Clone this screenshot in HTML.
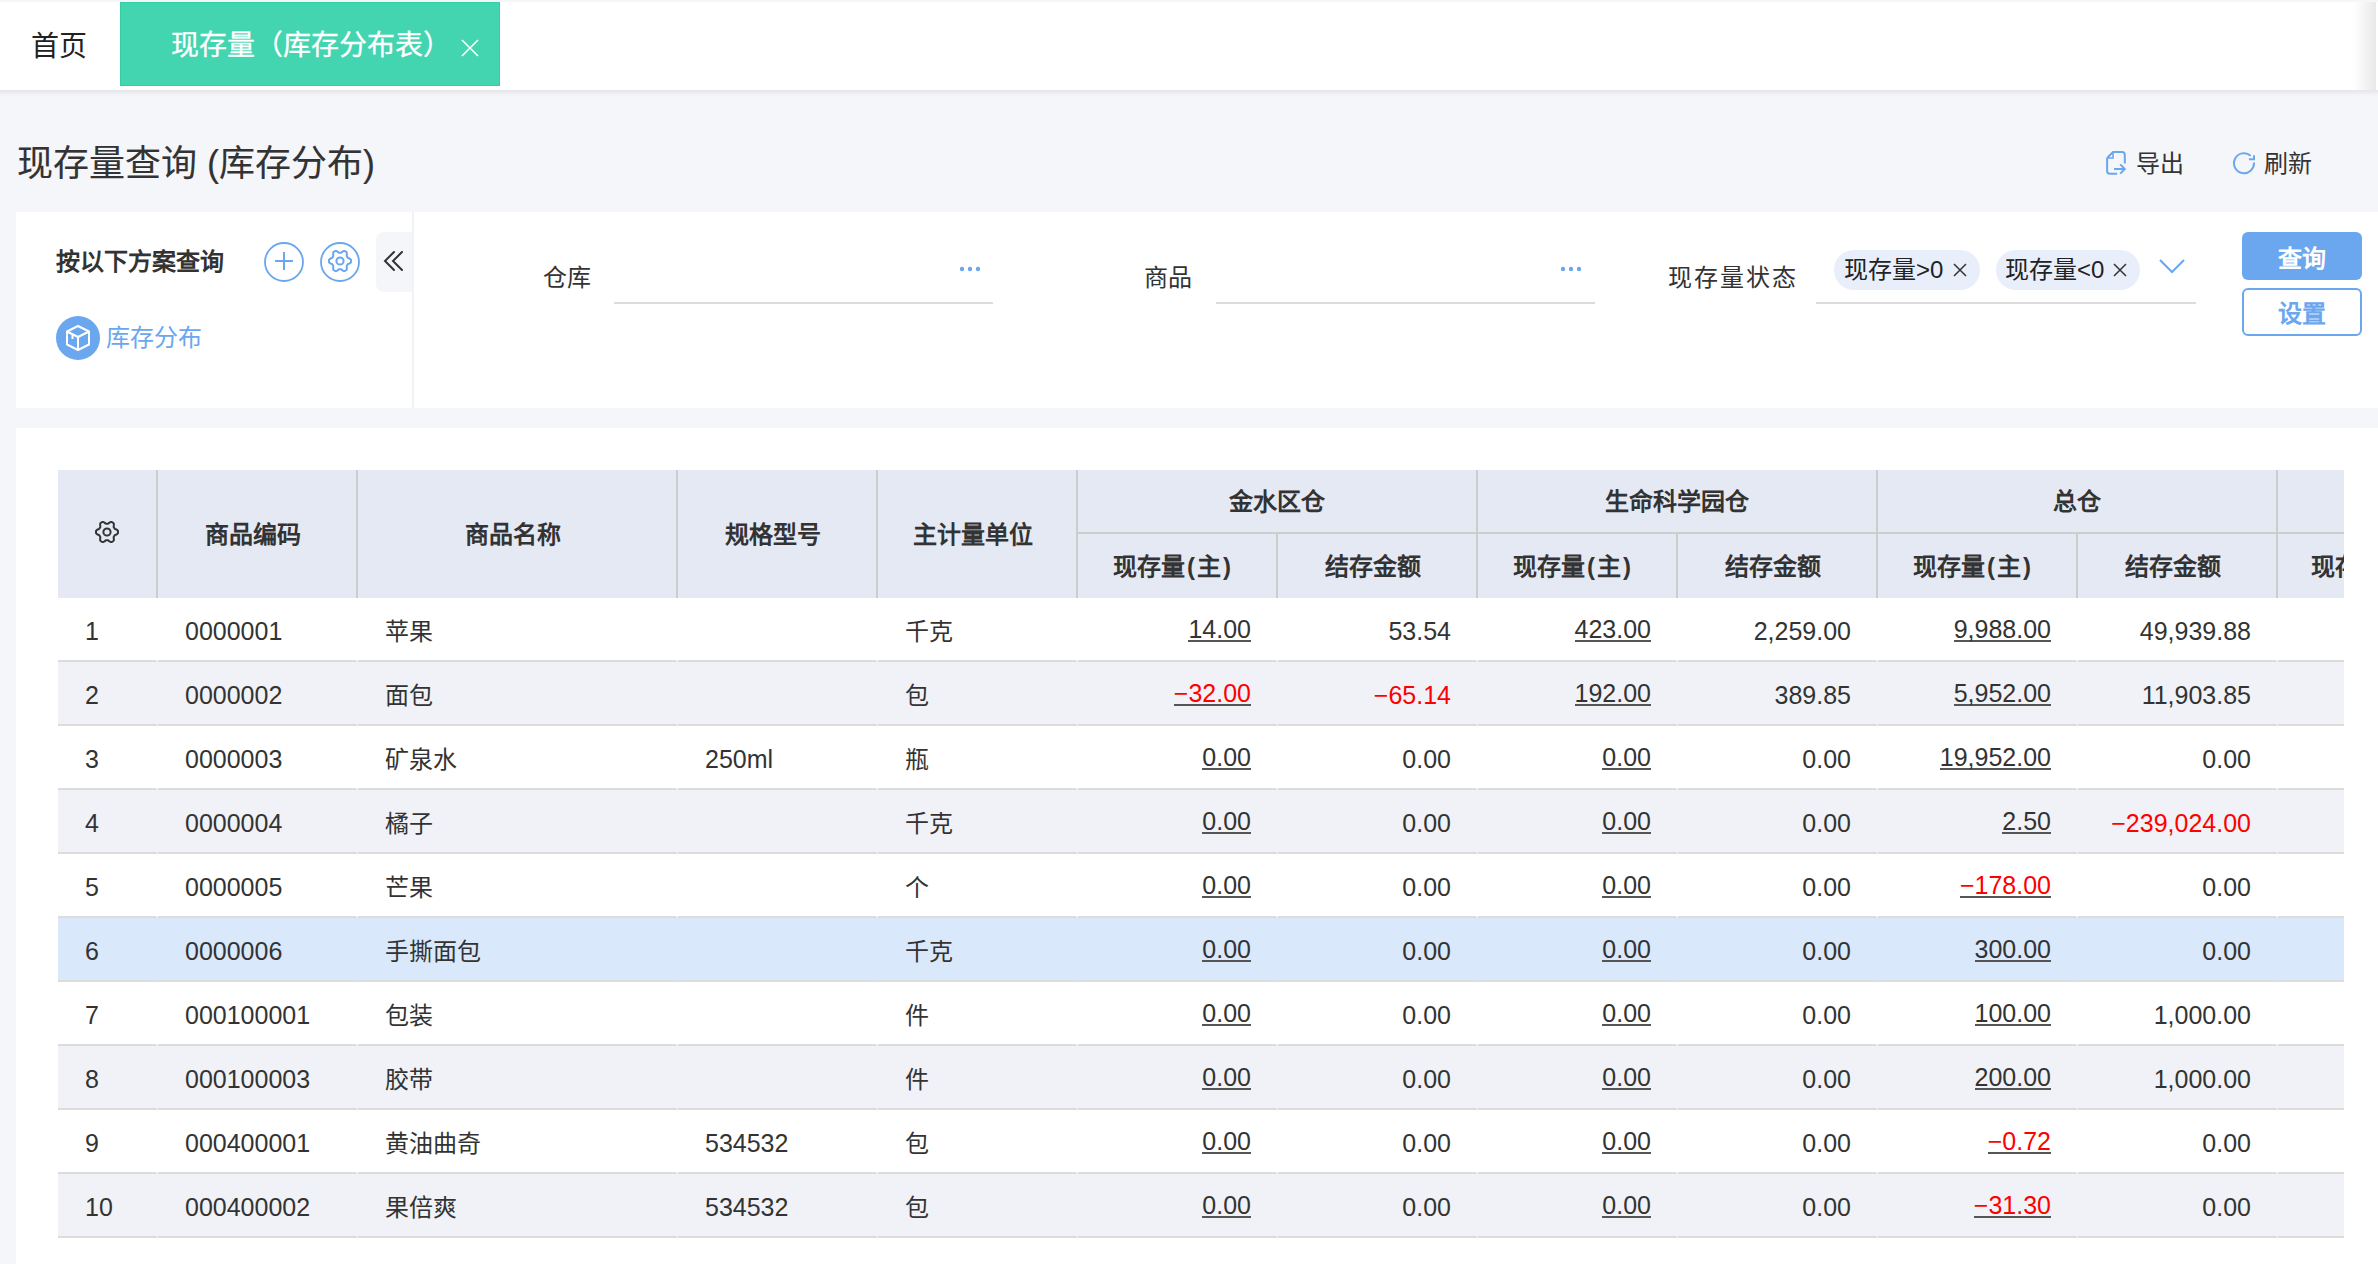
<!DOCTYPE html>
<html lang="zh-CN"><head><meta charset="utf-8">
<style>
*{box-sizing:border-box;margin:0;padding:0}
html,body{width:2378px;height:1264px;overflow:hidden;background:#f5f6fa;font-family:"Liberation Sans",sans-serif;color:#333}
.abs{position:absolute}
#tabbar{position:absolute;left:0;top:2px;width:2378px;height:88px;background:#fff}
#tabsh2{position:absolute;left:0;top:90px;width:2378px;height:6px;background:linear-gradient(rgba(0,0,0,0.065),rgba(0,0,0,0))}
#tabshadow{position:absolute;left:2354px;top:2px;width:22px;height:88px;background:linear-gradient(to right,rgba(0,0,0,0),rgba(0,0,0,0.09))}
.tab-home{position:absolute;left:31px;top:28px;font-size:28px;line-height:34px;color:#222}
.tab-act{position:absolute;left:120px;top:0px;width:380px;height:84px;background:#43d4b0;box-shadow:inset 0 0 0 1px #35cfa6}
.tab-act .t{position:absolute;left:51px;top:27px;font-size:28px;line-height:34px;color:#fff;white-space:nowrap;-webkit-text-stroke:0.3px #fff}
.title{position:absolute;left:17px;top:142px;font-size:36px;line-height:44px;color:#333;white-space:nowrap;-webkit-text-stroke:0.1px #333}
.tool{position:absolute;top:151px;font-size:24px;line-height:26px;color:#333}
#filter{position:absolute;left:16px;top:212px;width:2362px;height:196px;background:#fff}
#fdiv{position:absolute;left:396px;top:0;width:2px;height:196px;background:#f0f2f7}
.lbl{position:absolute;font-size:24px;line-height:28px;color:#333;white-space:nowrap}
.uline{position:absolute;height:2px;background:#dcdcdc}
.dots{position:absolute;width:22px;height:6px}
.tag{position:absolute;top:38px;height:40px;border-radius:20px;background:#e8effb;font-size:24px;line-height:40px;color:#222;white-space:nowrap}
.btn{position:absolute;left:2226px;width:120px;height:48px;border-radius:6px;font-size:24px;font-weight:bold;text-align:center;line-height:48px;padding-top:3px}
#tpanel{position:absolute;left:16px;top:428px;width:2362px;height:836px;background:#fff}
#twrap{position:absolute;left:58px;top:470px;width:2286px;height:794px;overflow:hidden}
table{border-collapse:separate;border-spacing:0;table-layout:fixed;width:2400px}
th{background:#e5e9f4;font-weight:bold;font-size:24px;color:#333;text-align:center;border-right:2px solid #cdcdcd;white-space:nowrap;overflow:hidden;padding-right:8px;padding-bottom:3px}
th.r1{padding-right:0;padding-bottom:4px}
.p{margin:0 2px}
th.r1{height:62px}
th.sub{height:66px;border-top:2px solid #cdcdcd}
td{height:64px;font-size:25px;color:#333;border-bottom:2px solid #dcdcdc;border-right:2px solid transparent;white-space:nowrap;padding:4px 25px 0 27px;overflow:hidden}
td .c{font-size:24px;position:relative;top:-2px}
td.n{text-align:right}
tr.s td{background:#f0f2f7}
tr.sel td{background:#d9e8fb}
.u{display:inline-block;border-bottom:2px solid #555;line-height:22px;position:relative;top:-2px}
.red{color:#f00}
</style></head><body>
<div id="tabbar">
  <div class="tab-home">首页</div>
  <div class="tab-act"><div class="t">现存量（库存分布表）</div>
    <svg class="abs" style="left:341px;top:37px" width="18" height="18" viewBox="0 0 18 18"><path d="M1 1L17 17M17 1L1 17" stroke="#fff" stroke-width="1.6"/></svg>
  </div>
</div>
<div id="tabshadow"></div>
<div id="tabsh2"></div>

<div class="title">现存量查询 (库存分布)</div>

<svg class="abs" style="left:2104px;top:149px" width="26" height="28" viewBox="0 0 26 28">
  <path d="M3.1 9 L9 3.1 H18 Q20.8 3.1 20.8 6 V14.6" fill="none" stroke="#6aa7ee" stroke-width="2"/>
  <path d="M3.1 9 V22 Q3.1 24.8 6 24.8 H13.2" fill="none" stroke="#6aa7ee" stroke-width="2"/>
  <path d="M3.6 9 H9 V3.6" fill="none" stroke="#6aa7ee" stroke-width="1.6"/>
  <path d="M10 20 H21 M16.2 15.4 L20.8 20 L16.2 24.6" fill="none" stroke="#6aa7ee" stroke-width="2"/>
</svg>
<div class="tool" style="left:2136px">导出</div>
<svg class="abs" style="left:2231px;top:151px" width="26" height="24" viewBox="0 0 26 24">
  <path d="M19.69 4.77 A10 10 0 1 0 22.98 11.5" fill="none" stroke="#6aa7ee" stroke-width="2"/>
  <path d="M17.9 8.3 H23 V4.2" fill="none" stroke="#6aa7ee" stroke-width="2"/>
</svg>
<div class="tool" style="left:2264px">刷新</div>

<div id="filter">
  <div class="lbl" style="left:40px;top:36px;font-weight:bold">按以下方案查询</div>
  <svg class="abs" style="left:248px;top:30px" width="40" height="40" viewBox="0 0 40 40">
    <circle cx="20" cy="20" r="19" fill="none" stroke="#6aa7ee" stroke-width="1.8"/>
    <path d="M11 19H29M20 10V28" stroke="#6aa7ee" stroke-width="2"/>
  </svg>
  <svg class="abs" style="left:304px;top:30px" width="40" height="40" viewBox="0 0 40 40">
    <circle cx="20" cy="20" r="19" fill="none" stroke="#6aa7ee" stroke-width="1.8"/>
    <g transform="translate(20 19)">
      <path d="M0.00 -8.30L0.43 -8.29L0.87 -8.25L1.34 -8.43L1.88 -8.87L2.50 -9.32L3.16 -9.73L3.86 -10.05L4.47 -10.05L4.99 -9.80L5.50 -9.53L5.99 -9.23L6.47 -8.90L6.77 -8.36L6.85 -7.61L6.82 -6.82L6.74 -6.07L6.64 -5.37L6.71 -4.88L6.96 -4.52L7.19 -4.15L7.40 -3.77L7.58 -3.38L7.97 -3.06L8.62 -2.80L9.32 -2.50L10.01 -2.13L10.63 -1.68L10.94 -1.15L10.98 -0.58L11.00 -0.00L10.98 0.58L10.94 1.15L10.63 1.68L10.01 2.13L9.32 2.50L8.62 2.80L7.97 3.06L7.58 3.38L7.40 3.77L7.19 4.15L6.96 4.52L6.71 4.88L6.64 5.37L6.74 6.07L6.82 6.82L6.85 7.61L6.77 8.36L6.47 8.90L5.99 9.23L5.50 9.53L4.99 9.80L4.47 10.05L3.86 10.05L3.16 9.73L2.50 9.32L1.88 8.87L1.34 8.43L0.87 8.25L0.43 8.29L0.00 8.30L-0.43 8.29L-0.87 8.25L-1.34 8.43L-1.88 8.87L-2.50 9.32L-3.16 9.73L-3.86 10.05L-4.47 10.05L-4.99 9.80L-5.50 9.53L-5.99 9.23L-6.47 8.90L-6.77 8.36L-6.85 7.61L-6.82 6.82L-6.74 6.07L-6.64 5.37L-6.71 4.88L-6.96 4.52L-7.19 4.15L-7.40 3.77L-7.58 3.38L-7.97 3.06L-8.62 2.80L-9.32 2.50L-10.01 2.13L-10.63 1.68L-10.94 1.15L-10.98 0.58L-11.00 0.00L-10.98 -0.58L-10.94 -1.15L-10.63 -1.68L-10.01 -2.13L-9.32 -2.50L-8.62 -2.80L-7.97 -3.06L-7.58 -3.38L-7.40 -3.77L-7.19 -4.15L-6.96 -4.52L-6.71 -4.88L-6.64 -5.37L-6.74 -6.07L-6.82 -6.82L-6.85 -7.61L-6.77 -8.36L-6.47 -8.90L-5.99 -9.23L-5.50 -9.53L-4.99 -9.80L-4.47 -10.05L-3.86 -10.05L-3.16 -9.73L-2.50 -9.32L-1.88 -8.87L-1.34 -8.43L-0.87 -8.25L-0.43 -8.29Z" fill="none" stroke="#6aa7ee" stroke-width="2" stroke-linejoin="round"/>
      <circle r="3.6" fill="none" stroke="#6aa7ee" stroke-width="2"/>
    </g>
  </svg>
  <div class="abs" style="left:360px;top:20px;width:36px;height:60px;background:#f5f6fa;border-radius:8px 0 0 8px"></div>
  <svg class="abs" style="left:367px;top:38px" width="24" height="24" viewBox="0 0 24 24">
    <path d="M11 2 L2 11 L11 20 M19 2 L10 11 L19 20" fill="none" stroke="#333" stroke-width="2" stroke-linecap="round"/>
  </svg>
  <div id="fdiv"></div>
  <svg class="abs" style="left:40px;top:104px" width="44" height="44" viewBox="0 0 44 44">
    <circle cx="22" cy="22" r="22" fill="#6aa7ee"/>
    <path d="M22 10 L33 15.5 V28.5 L22 34 L11 28.5 V15.5 Z M11 15.5 L22 21 L33 15.5 M22 21 V34" fill="none" stroke="#fff" stroke-width="2" stroke-linejoin="round"/>
    <path d="M16.5 18.3 V23" stroke="#fff" stroke-width="2"/>
  </svg>
  <div class="lbl" style="left:90px;top:112px;color:#6aa7ee">库存分布</div>

  <div class="lbl" style="left:527px;top:52px">仓库</div>
  <div class="uline" style="left:598px;top:90px;width:379px"></div>
  <svg class="dots" style="left:943px;top:54px" viewBox="0 0 22 6"><circle cx="3" cy="3" r="2.2" fill="#6aa7ee"/><circle cx="11" cy="3" r="2.2" fill="#6aa7ee"/><circle cx="19" cy="3" r="2.2" fill="#6aa7ee"/></svg>

  <div class="lbl" style="left:1128px;top:52px">商品</div>
  <div class="uline" style="left:1200px;top:90px;width:379px"></div>
  <svg class="dots" style="left:1544px;top:54px" viewBox="0 0 22 6"><circle cx="3" cy="3" r="2.2" fill="#6aa7ee"/><circle cx="11" cy="3" r="2.2" fill="#6aa7ee"/><circle cx="19" cy="3" r="2.2" fill="#6aa7ee"/></svg>

  <div class="lbl" style="left:1652px;top:52px;letter-spacing:2px">现存量状态</div>
  <div class="uline" style="left:1800px;top:90px;width:380px"></div>
  <div class="tag" style="left:1818px;width:146px"><span style="position:absolute;left:10px">现存量&gt;0</span>
    <svg class="abs" style="left:119px;top:13px" width="14" height="14" viewBox="0 0 14 14"><path d="M1 1L13 13M13 1L1 13" stroke="#333" stroke-width="1.5"/></svg></div>
  <div class="tag" style="left:1980px;width:144px"><span style="position:absolute;left:9px">现存量&lt;0</span>
    <svg class="abs" style="left:117px;top:13px" width="14" height="14" viewBox="0 0 14 14"><path d="M1 1L13 13M13 1L1 13" stroke="#333" stroke-width="1.5"/></svg></div>
  <svg class="abs" style="left:2143px;top:47px" width="26" height="15" viewBox="0 0 26 15"><path d="M1 1L13 13L25 1" fill="none" stroke="#6aa7ee" stroke-width="2"/></svg>

  <div class="btn" style="top:20px;background:#6ba7ef;color:#fff">查询</div>
  <div class="btn" style="top:76px;background:#fff;color:#6aa7ee;border:2px solid #6aa7ee;line-height:44px;padding-top:2px">设置</div>
</div>

<div id="tpanel"></div>
<div id="twrap">
<table>
<colgroup><col style="width:100px"><col style="width:200px"><col style="width:320px"><col style="width:200px"><col style="width:200px"><col style="width:200px"><col style="width:200px"><col style="width:200px"><col style="width:200px"><col style="width:200px"><col style="width:200px"><col style="width:180px"></colgroup>
<thead>
<tr>
<th rowspan="2" style="padding-right:0;padding-top:0"><svg width="26" height="26" viewBox="0 0 26 26" style="vertical-align:middle;position:relative;top:-2px"><g transform="translate(13 13)"><path d="M0.00 -8.30L0.43 -8.29L0.87 -8.25L1.34 -8.43L1.88 -8.87L2.50 -9.32L3.16 -9.73L3.86 -10.05L4.47 -10.05L4.99 -9.80L5.50 -9.53L5.99 -9.23L6.47 -8.90L6.77 -8.36L6.85 -7.61L6.82 -6.82L6.74 -6.07L6.64 -5.37L6.71 -4.88L6.96 -4.52L7.19 -4.15L7.40 -3.77L7.58 -3.38L7.97 -3.06L8.62 -2.80L9.32 -2.50L10.01 -2.13L10.63 -1.68L10.94 -1.15L10.98 -0.58L11.00 -0.00L10.98 0.58L10.94 1.15L10.63 1.68L10.01 2.13L9.32 2.50L8.62 2.80L7.97 3.06L7.58 3.38L7.40 3.77L7.19 4.15L6.96 4.52L6.71 4.88L6.64 5.37L6.74 6.07L6.82 6.82L6.85 7.61L6.77 8.36L6.47 8.90L5.99 9.23L5.50 9.53L4.99 9.80L4.47 10.05L3.86 10.05L3.16 9.73L2.50 9.32L1.88 8.87L1.34 8.43L0.87 8.25L0.43 8.29L0.00 8.30L-0.43 8.29L-0.87 8.25L-1.34 8.43L-1.88 8.87L-2.50 9.32L-3.16 9.73L-3.86 10.05L-4.47 10.05L-4.99 9.80L-5.50 9.53L-5.99 9.23L-6.47 8.90L-6.77 8.36L-6.85 7.61L-6.82 6.82L-6.74 6.07L-6.64 5.37L-6.71 4.88L-6.96 4.52L-7.19 4.15L-7.40 3.77L-7.58 3.38L-7.97 3.06L-8.62 2.80L-9.32 2.50L-10.01 2.13L-10.63 1.68L-10.94 1.15L-10.98 0.58L-11.00 0.00L-10.98 -0.58L-10.94 -1.15L-10.63 -1.68L-10.01 -2.13L-9.32 -2.50L-8.62 -2.80L-7.97 -3.06L-7.58 -3.38L-7.40 -3.77L-7.19 -4.15L-6.96 -4.52L-6.71 -4.88L-6.64 -5.37L-6.74 -6.07L-6.82 -6.82L-6.85 -7.61L-6.77 -8.36L-6.47 -8.90L-5.99 -9.23L-5.50 -9.53L-4.99 -9.80L-4.47 -10.05L-3.86 -10.05L-3.16 -9.73L-2.50 -9.32L-1.88 -8.87L-1.34 -8.43L-0.87 -8.25L-0.43 -8.29Z" fill="none" stroke="#333" stroke-width="2"/><circle r="3.6" fill="none" stroke="#333" stroke-width="2"/></g></svg></th>
<th rowspan="2">商品编码</th>
<th rowspan="2">商品名称</th>
<th rowspan="2">规格型号</th>
<th rowspan="2">主计量单位</th>
<th class="r1" colspan="2">金水区仓</th>
<th class="r1" colspan="2">生命科学园仓</th>
<th class="r1" colspan="2">总仓</th>
<th class="r1" colspan="1"></th>
</tr>
<tr>
<th class="sub">现存量<span class="p">(</span>主<span class="p">)</span></th><th class="sub">结存金额</th>
<th class="sub">现存量<span class="p">(</span>主<span class="p">)</span></th><th class="sub">结存金额</th>
<th class="sub">现存量<span class="p">(</span>主<span class="p">)</span></th><th class="sub">结存金额</th>
<th class="sub" style="text-align:left;padding-left:33px">现存量<span class="p">(</span>主<span class="p">)</span></th>
</tr>
</thead>
<tbody>
<tr class=""><td>1</td><td>0000001</td><td><span class="c">苹果</span></td><td></td><td><span class="c">千克</span></td><td class="n"><span class="u">14.00</span></td><td class="n">53.54</td><td class="n"><span class="u">423.00</span></td><td class="n">2,259.00</td><td class="n"><span class="u">9,988.00</span></td><td class="n">49,939.88</td><td class="n"></td></tr>
<tr class="s"><td>2</td><td>0000002</td><td><span class="c">面包</span></td><td></td><td><span class="c">包</span></td><td class="n"><span class="u"><span class="red">&minus;32.00</span></span></td><td class="n"><span class="red">&minus;65.14</span></td><td class="n"><span class="u">192.00</span></td><td class="n">389.85</td><td class="n"><span class="u">5,952.00</span></td><td class="n">11,903.85</td><td class="n"></td></tr>
<tr class=""><td>3</td><td>0000003</td><td><span class="c">矿泉水</span></td><td>250ml</td><td><span class="c">瓶</span></td><td class="n"><span class="u">0.00</span></td><td class="n">0.00</td><td class="n"><span class="u">0.00</span></td><td class="n">0.00</td><td class="n"><span class="u">19,952.00</span></td><td class="n">0.00</td><td class="n"></td></tr>
<tr class="s"><td>4</td><td>0000004</td><td><span class="c">橘子</span></td><td></td><td><span class="c">千克</span></td><td class="n"><span class="u">0.00</span></td><td class="n">0.00</td><td class="n"><span class="u">0.00</span></td><td class="n">0.00</td><td class="n"><span class="u">2.50</span></td><td class="n"><span class="red">&minus;239,024.00</span></td><td class="n"></td></tr>
<tr class=""><td>5</td><td>0000005</td><td><span class="c">芒果</span></td><td></td><td><span class="c">个</span></td><td class="n"><span class="u">0.00</span></td><td class="n">0.00</td><td class="n"><span class="u">0.00</span></td><td class="n">0.00</td><td class="n"><span class="u"><span class="red">&minus;178.00</span></span></td><td class="n">0.00</td><td class="n"></td></tr>
<tr class="sel"><td>6</td><td>0000006</td><td><span class="c">手撕面包</span></td><td></td><td><span class="c">千克</span></td><td class="n"><span class="u">0.00</span></td><td class="n">0.00</td><td class="n"><span class="u">0.00</span></td><td class="n">0.00</td><td class="n"><span class="u">300.00</span></td><td class="n">0.00</td><td class="n"></td></tr>
<tr class=""><td>7</td><td>000100001</td><td><span class="c">包装</span></td><td></td><td><span class="c">件</span></td><td class="n"><span class="u">0.00</span></td><td class="n">0.00</td><td class="n"><span class="u">0.00</span></td><td class="n">0.00</td><td class="n"><span class="u">100.00</span></td><td class="n">1,000.00</td><td class="n"></td></tr>
<tr class="s"><td>8</td><td>000100003</td><td><span class="c">胶带</span></td><td></td><td><span class="c">件</span></td><td class="n"><span class="u">0.00</span></td><td class="n">0.00</td><td class="n"><span class="u">0.00</span></td><td class="n">0.00</td><td class="n"><span class="u">200.00</span></td><td class="n">1,000.00</td><td class="n"></td></tr>
<tr class=""><td>9</td><td>000400001</td><td><span class="c">黄油曲奇</span></td><td>534532</td><td><span class="c">包</span></td><td class="n"><span class="u">0.00</span></td><td class="n">0.00</td><td class="n"><span class="u">0.00</span></td><td class="n">0.00</td><td class="n"><span class="u"><span class="red">&minus;0.72</span></span></td><td class="n">0.00</td><td class="n"></td></tr>
<tr class="s"><td>10</td><td>000400002</td><td><span class="c">果倍爽</span></td><td>534532</td><td><span class="c">包</span></td><td class="n"><span class="u">0.00</span></td><td class="n">0.00</td><td class="n"><span class="u">0.00</span></td><td class="n">0.00</td><td class="n"><span class="u"><span class="red">&minus;31.30</span></span></td><td class="n">0.00</td><td class="n"></td></tr>
</tbody>
</table>
</div>
</body></html>
